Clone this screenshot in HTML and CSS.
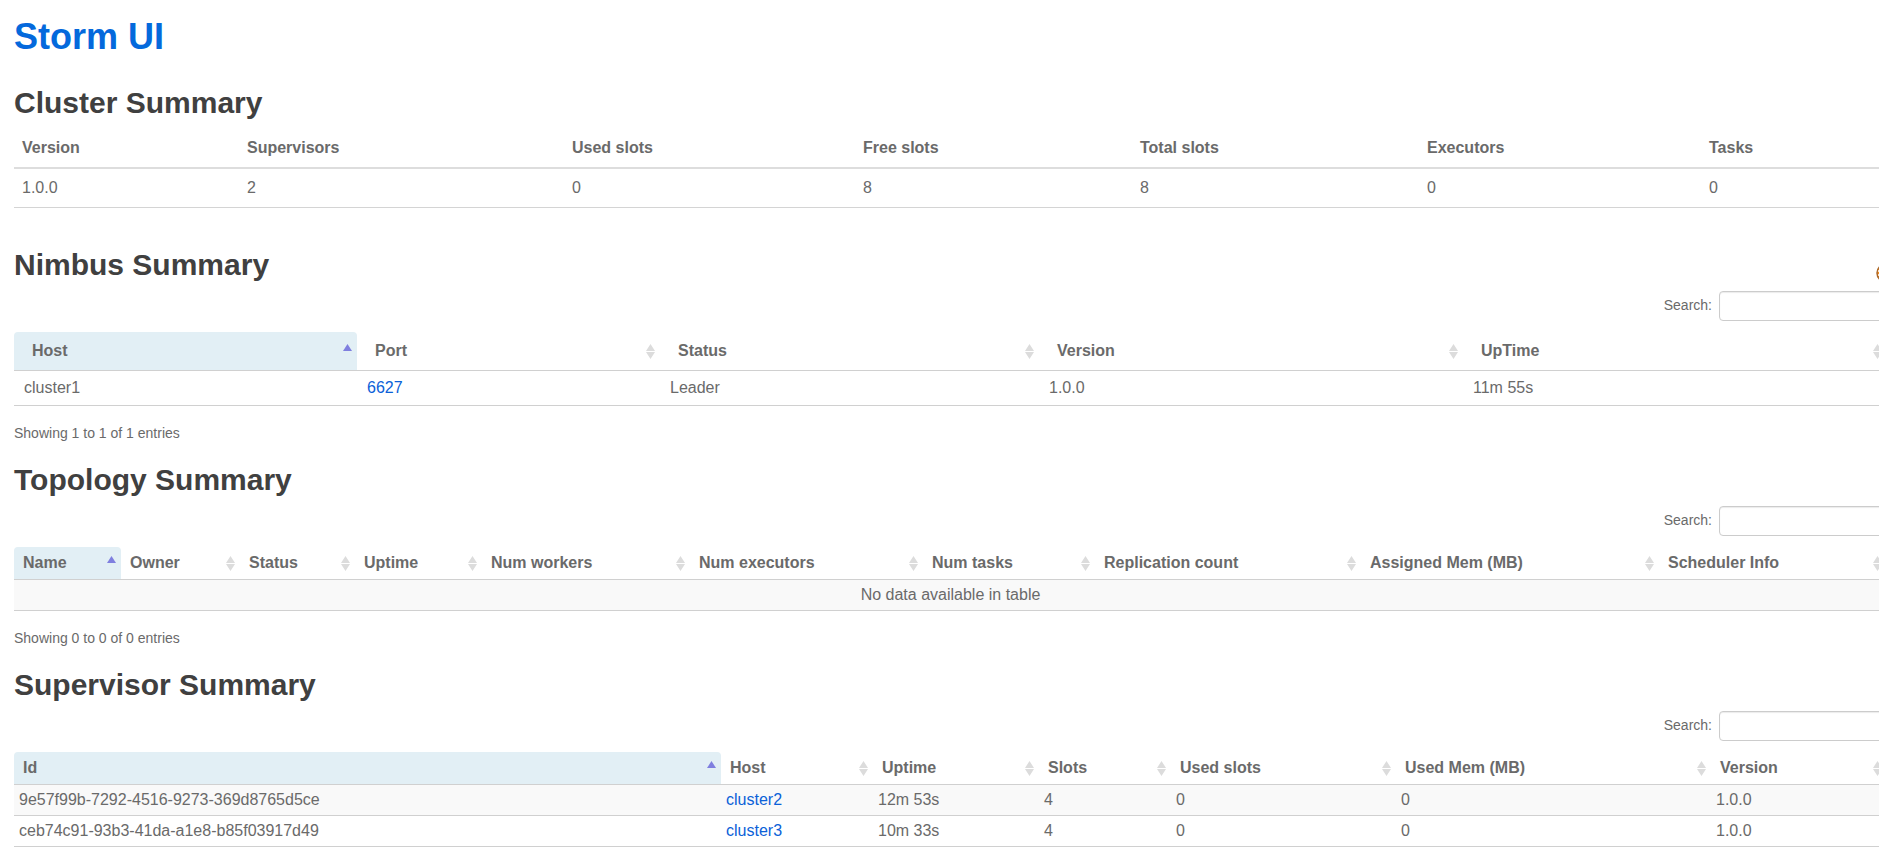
FILE: index.html
```html
<!DOCTYPE html>
<html lang="en">
<head>
<meta charset="utf-8">
<title>Storm UI</title>
<link rel="stylesheet" href="styles.css">
</head>
<body>
<svg class="symbols" aria-hidden="true">
  <symbol id="both" viewBox="0 0 9 15"><path d="M4.500 0L9 7H0zM0 8H9L4.500 15z" fill="#dcdcdc"/></symbol>
  <symbol id="asc" viewBox="0 0 9 15"><path d="M4.500 0L9 7H0z" fill="#7f7fdf"/></symbol>
</svg>
<main class="page">
  <h1><a href="#">Storm UI</a></h1>

  <section>
    <h2>Cluster Summary</h2>
    <table class="plain cluster">
      <colgroup><col><col><col><col><col><col><col></colgroup>
      <thead><tr><th>Version</th><th>Supervisors</th><th>Used slots</th><th>Free slots</th><th>Total slots</th><th>Executors</th><th>Tasks</th></tr></thead>
      <tbody><tr><td>1.0.0</td><td>2</td><td>0</td><td>8</td><td>8</td><td>0</td><td>0</td></tr></tbody>
    </table>
  </section>

  <section class="after-plain">
    <div class="heading">
      <h2>Nimbus Summary</h2>
      <svg class="badge" width="20" height="20" viewBox="0 0 20 20" aria-hidden="true"><circle cx="10" cy="10" r="9" fill="#f08a1c" stroke="#a8672c" stroke-width="1.500"/><path d="M2 8h14M2 12h14" stroke="#fff" stroke-width="1.500"/></svg>
    </div>
    <div class="filter"><label for="nimbus-search">Search:</label><input id="nimbus-search" type="search"></div>
    <table class="grid nimbus">
      <colgroup><col><col><col><col><col></colgroup>
      <thead><tr>
        <th class="sorted"><button>Host<svg class="arrow"><use href="#asc"/></svg></button></th>
        <th><button>Port<svg class="arrow"><use href="#both"/></svg></button></th>
        <th><button>Status<svg class="arrow"><use href="#both"/></svg></button></th>
        <th><button>Version<svg class="arrow"><use href="#both"/></svg></button></th>
        <th><button>UpTime<svg class="arrow"><use href="#both"/></svg></button></th>
      </tr></thead>
      <tbody><tr><td>cluster1</td><td><a href="#">6627</a></td><td>Leader</td><td>1.0.0</td><td>11m 55s</td></tr></tbody>
    </table>
    <p class="info">Showing 1 to 1 of 1 entries</p>
  </section>

  <section>
    <h2>Topology Summary</h2>
    <div class="filter"><label for="topology-search">Search:</label><input id="topology-search" type="search"></div>
    <table class="grid compact topology">
      <colgroup><col><col><col><col><col><col><col><col><col><col></colgroup>
      <thead><tr>
        <th class="sorted"><button>Name<svg class="arrow"><use href="#asc"/></svg></button></th>
        <th><button>Owner<svg class="arrow"><use href="#both"/></svg></button></th>
        <th><button>Status<svg class="arrow"><use href="#both"/></svg></button></th>
        <th><button>Uptime<svg class="arrow"><use href="#both"/></svg></button></th>
        <th><button>Num workers<svg class="arrow"><use href="#both"/></svg></button></th>
        <th><button>Num executors<svg class="arrow"><use href="#both"/></svg></button></th>
        <th><button>Num tasks<svg class="arrow"><use href="#both"/></svg></button></th>
        <th><button>Replication count<svg class="arrow"><use href="#both"/></svg></button></th>
        <th><button>Assigned Mem (MB)<svg class="arrow"><use href="#both"/></svg></button></th>
        <th><button>Scheduler Info<svg class="arrow"><use href="#both"/></svg></button></th>
      </tr></thead>
      <tbody><tr class="odd"><td class="empty" colspan="10">No data available in table</td></tr></tbody>
    </table>
    <p class="info">Showing 0 to 0 of 0 entries</p>
  </section>

  <section>
    <h2>Supervisor Summary</h2>
    <div class="filter"><label for="supervisor-search">Search:</label><input id="supervisor-search" type="search"></div>
    <table class="grid compact supervisor">
      <colgroup><col><col><col><col><col><col><col></colgroup>
      <thead><tr>
        <th class="sorted"><button>Id<svg class="arrow"><use href="#asc"/></svg></button></th>
        <th><button>Host<svg class="arrow"><use href="#both"/></svg></button></th>
        <th><button>Uptime<svg class="arrow"><use href="#both"/></svg></button></th>
        <th><button>Slots<svg class="arrow"><use href="#both"/></svg></button></th>
        <th><button>Used slots<svg class="arrow"><use href="#both"/></svg></button></th>
        <th><button>Used Mem (MB)<svg class="arrow"><use href="#both"/></svg></button></th>
        <th><button>Version<svg class="arrow"><use href="#both"/></svg></button></th>
      </tr></thead>
      <tbody>
        <tr class="odd"><td>9e57f99b-7292-4516-9273-369d8765d5ce</td><td><a href="#">cluster2</a></td><td>12m 53s</td><td>4</td><td>0</td><td>0</td><td>1.0.0</td></tr>
        <tr><td>ceb74c91-93b3-41da-a1e8-b85f03917d49</td><td><a href="#">cluster3</a></td><td>10m 33s</td><td>4</td><td>0</td><td>0</td><td>1.0.0</td></tr>
      </tbody>
    </table>
    <p class="info">Showing 1 to 2 of 2 entries</p>
  </section>
</main>
</body>
</html>
```
FILE: styles.css
```css
* { box-sizing: border-box; }
html { overflow-x: hidden; }
body {
  margin: 0;
  overflow-x: hidden;
  background: #fff;
  color: #6a6a6a;
  font: 16px/18px "Liberation Sans", Arial, sans-serif;
}
a { color: #0b61d8; text-decoration: none; }
.symbols { display: none; }

/* The content runs slightly past the right edge of the window. */
.page { margin: 0 -8px 0 14px; padding-top: 17px; }

h1, h2 { margin: 0; font-weight: bold; }
h1 { font-size: 36px; line-height: 40px; margin-bottom: 29px; }
h1 a { color: #0469dc; }
h2 { font-size: 30px; line-height: 33px; color: #404040; }
.heading { position: relative; }
.badge { position: absolute; right: -9px; top: 15px; }

table { width: 100%; table-layout: fixed; border-collapse: separate; border-spacing: 0; }
th, td { text-align: left; white-space: nowrap; }

.plain { margin-top: 9px; line-height: 23px; }
.plain th { padding: 8px; border-bottom: 2px solid #ddd; }
.plain td { padding: 7px 8px 8px; border-bottom: 1px solid #d4d4d4; }
.after-plain { margin-top: 40px; }

.filter {
  display: flex;
  justify-content: flex-end;
  align-items: center;
  gap: 7px;
  margin: 10px 0 11px;
  font-size: 14px;
}
.filter label { line-height: 20px; padding-bottom: 2px; }
.filter input {
  width: 168px;
  height: 30px;
  padding: 4px 6px;
  border: 1px solid #ccc;
  border-radius: 4px;
  background: #fff;
  box-shadow: inset 0 1px 1px rgba(0, 0, 0, .08);
  font: inherit;
  color: inherit;
  appearance: none;
}

.grid th { padding: 0; border-bottom: 1px solid #d0d0d0; }
.grid td { padding: 8px 10px; border-bottom: 1px solid #d0d0d0; }
.grid .sorted { background: #e2eff5; border-radius: 4px 4px 0 0; }
.grid button {
  display: flex;
  justify-content: space-between;
  align-items: center;
  width: 100%;
  padding: 10px 5px 10px 18px;
  border: 0;
  background: none;
  font: inherit;
  color: inherit;
  text-align: left;
}
.arrow { flex: none; width: 9px; height: 15px; }
.compact button { padding: 7px 5px 7px 9px; }
.compact td { padding: 6px 5px; }
.compact .odd td { background: #f9f9f9; }
.grid .empty { text-align: center; }

.info { margin: 17px 0 20px; font-size: 14px; line-height: 20px; }

.cluster col:nth-child(1) { width: 225px; }
.cluster col:nth-child(2) { width: 325px; }
.cluster col:nth-child(3) { width: 291px; }
.cluster col:nth-child(4) { width: 277px; }
.cluster col:nth-child(5) { width: 287px; }
.cluster col:nth-child(6) { width: 282px; }
.cluster col:nth-child(7) { width: 186px; }

.nimbus col:nth-child(1) { width: 343px; }
.nimbus col:nth-child(2) { width: 303px; }
.nimbus col:nth-child(3) { width: 379px; }
.nimbus col:nth-child(4) { width: 424px; }
.nimbus col:nth-child(5) { width: 424px; }

.topology col:nth-child(1) { width: 107px; }
.topology col:nth-child(2) { width: 119px; }
.topology col:nth-child(3) { width: 115px; }
.topology col:nth-child(4) { width: 127px; }
.topology col:nth-child(5) { width: 208px; }
.topology col:nth-child(6) { width: 233px; }
.topology col:nth-child(7) { width: 172px; }
.topology col:nth-child(8) { width: 266px; }
.topology col:nth-child(9) { width: 298px; }
.topology col:nth-child(10) { width: 228px; }

.supervisor col:nth-child(1) { width: 707px; }
.supervisor col:nth-child(2) { width: 152px; }
.supervisor col:nth-child(3) { width: 166px; }
.supervisor col:nth-child(4) { width: 132px; }
.supervisor col:nth-child(5) { width: 225px; }
.supervisor col:nth-child(6) { width: 315px; }
.supervisor col:nth-child(7) { width: 176px; }
```
